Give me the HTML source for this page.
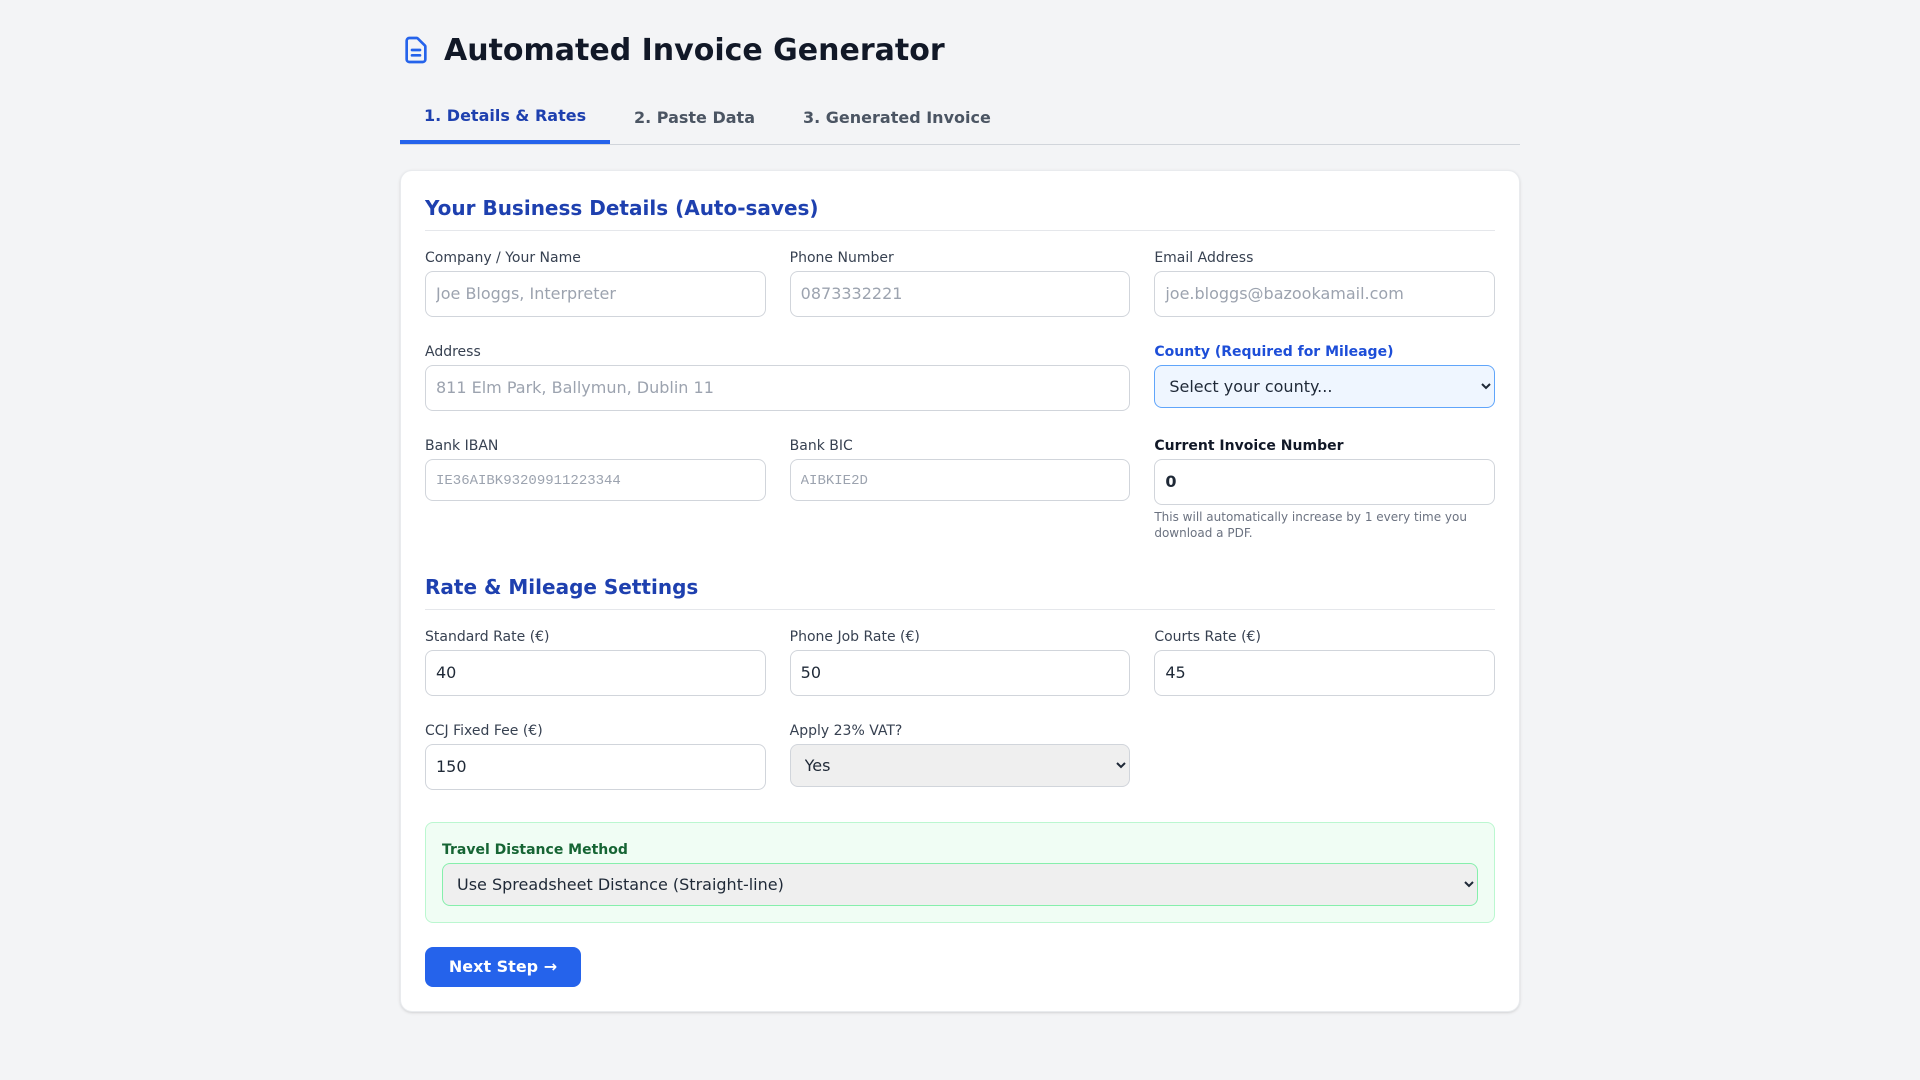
<!DOCTYPE html>
<html lang="en">
<head>
<meta charset="utf-8">
<title>Automated Invoice Generator</title>
<style>
*{box-sizing:border-box;margin:0;padding:0}
html,body{width:1920px;height:1080px;overflow:hidden;background:#f3f4f6;font-family:"DejaVu Sans",sans-serif;color:#1f2937;font-size:16px;line-height:24px}
.a{position:absolute}
h1{position:absolute;left:444px;top:33px;font-size:30px;line-height:36px;font-weight:700;color:#111827;white-space:nowrap}
.tabline{position:absolute;left:400px;top:144px;width:1120px;height:1px;background:#d1d5db}
.tab{position:absolute;font-weight:700;color:#4b5563;white-space:nowrap;line-height:24px}
.tabul{position:absolute;left:400px;top:140px;width:210px;height:4px;background:#2563eb}
.card{position:absolute;left:400px;top:170px;width:1120px;height:842px;background:#fff;border:1px solid #e9ebee;border-radius:12px;box-shadow:0 1px 3px rgba(0,0,0,.1),0 1px 2px -1px rgba(0,0,0,.1)}
h2{position:absolute;left:425px;font-size:20px;line-height:28px;font-weight:700;color:#1e40af;white-space:nowrap}
.rule{position:absolute;left:425px;width:1070px;height:1px;background:#e5e7eb}
label{position:absolute;font-size:14px;line-height:20px;color:#374151;white-space:nowrap}
input{position:absolute;width:340.67px;height:46px;padding:9px 10px 11px;border:1px solid #d1d5db;border-radius:8px;font:16px/24px "DejaVu Sans",sans-serif;color:#1f2937;background:#fff;outline:none}
input::placeholder{color:#9ca3af;opacity:1}
input.mono{height:42px;padding:11px 10px 9px;font:14px/20px "Liberation Mono",monospace}
select{position:absolute;width:340.67px;height:43px;padding:0 12px 0 10px;border:1px solid #d1d5db;border-radius:8px;font:16px "DejaVu Sans",sans-serif;color:#1f2937;background-color:#efefef;outline:none}
.c1{left:425px}.c2{left:789.67px}.c3{left:1154.33px}
.note{position:absolute;left:1154.33px;top:509px;width:340.67px;font-size:12px;line-height:16px;color:#6b7280}
.green{position:absolute;left:425px;top:822px;width:1070px;height:101px;background:#f0fdf4;border:1px solid #bbf7d0;border-radius:8px}
.btn{position:absolute;left:425px;top:947px;width:156px;height:40px;background:#2563eb;color:#fff;font:700 16px/24px "DejaVu Sans",sans-serif;border:0;border-radius:8px;text-align:center}
</style>
</head>
<body>
<svg class="a" style="left:400px;top:34px" width="32" height="32" viewBox="0 0 24 24" fill="none" stroke="#2563eb" stroke-width="2" stroke-linecap="round" stroke-linejoin="round"><path d="M9 12h6m-6 4h6m2 5H7a2 2 0 0 1-2-2V5a2 2 0 0 1 2-2h5.586a1 1 0 0 1 .707.293l5.414 5.414a1 1 0 0 1 .293.707V19a2 2 0 0 1-2 2z"/></svg>
<h1>Automated Invoice Generator</h1>

<div class="tabline"></div>
<div class="tabul"></div>
<div class="tab" style="left:424px;top:104px;color:#1e40af">1. Details &amp; Rates</div>
<div class="tab" style="left:634px;top:106px">2. Paste Data</div>
<div class="tab" style="left:803px;top:106px">3. Generated Invoice</div>

<div class="card"></div>

<h2 style="top:194px">Your Business Details (Auto-saves)</h2>
<div class="rule" style="top:230px"></div>

<label class="c1" style="top:248px">Company / Your Name</label>
<input class="c1" style="top:271px" placeholder="Joe Bloggs, Interpreter">
<label class="c2" style="top:248px">Phone Number</label>
<input class="c2" style="top:271px" placeholder="0873332221">
<label class="c3" style="top:248px">Email Address</label>
<input class="c3" style="top:271px" placeholder="joe.bloggs@bazookamail.com">

<label class="c1" style="top:342px">Address</label>
<input class="c1" style="top:365px;width:705.33px" placeholder="811 Elm Park, Ballymun, Dublin 11">
<label class="c3" style="top:342px;color:#1d4ed8;font-weight:700">County (Required for Mileage)</label>
<select class="c3" style="top:365px;background-color:#eff6ff;border-color:#60a5fa"><option>Select your county...</option></select>

<label class="c1" style="top:436px">Bank IBAN</label>
<input class="c1 mono" style="top:459px" placeholder="IE36AIBK93209911223344">
<label class="c2" style="top:436px">Bank BIC</label>
<input class="c2 mono" style="top:459px" placeholder="AIBKIE2D">
<label class="c3" style="top:436px;color:#111827;font-weight:700">Current Invoice Number</label>
<input class="c3" style="top:459px;font-weight:700" value="0">
<div class="note">This will automatically increase by 1 every time you download a PDF.</div>

<h2 style="top:573px">Rate &amp; Mileage Settings</h2>
<div class="rule" style="top:609px"></div>

<label class="c1" style="top:627px">Standard Rate (€)</label>
<input class="c1" style="top:650px" value="40">
<label class="c2" style="top:627px">Phone Job Rate (€)</label>
<input class="c2" style="top:650px" value="50">
<label class="c3" style="top:627px">Courts Rate (€)</label>
<input class="c3" style="top:650px" value="45">

<label class="c1" style="top:721px">CCJ Fixed Fee (€)</label>
<input class="c1" style="top:744px" value="150">
<label class="c2" style="top:721px">Apply 23% VAT?</label>
<select class="c2" style="top:744px"><option>Yes</option></select>

<div class="green"></div>
<label style="left:442px;top:840px;color:#166534;font-weight:700">Travel Distance Method</label>
<select style="left:442px;top:863px;width:1036px;border-color:#86efac"><option>Use Spreadsheet Distance (Straight-line)</option></select>

<button class="btn">Next Step →</button>
</body>
</html>
